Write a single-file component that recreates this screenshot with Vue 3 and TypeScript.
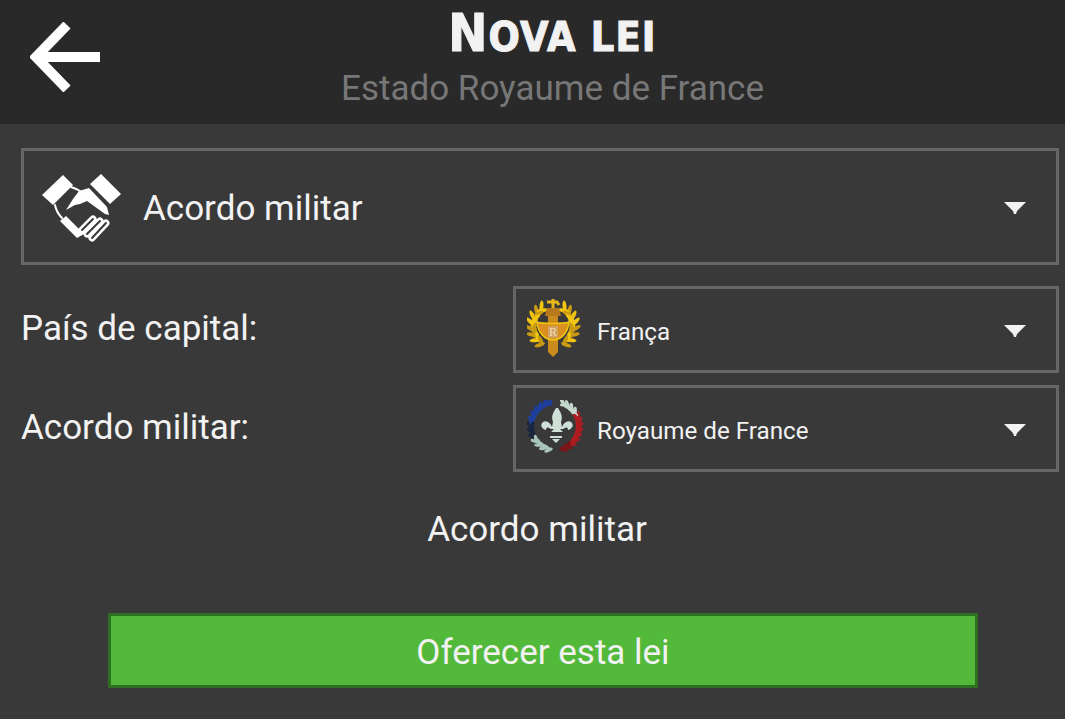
<script setup lang="ts">
interface Row {
  label: string
  value: string
  icon: 'emblem' | 'wreath'
}

interface Leaf {
  x: number
  y: number
  rot: number
  fill: string
}

const rows: Row[] = [
  { label: 'País de capital:', value: 'França', icon: 'emblem' },
  { label: 'Acordo militar:', value: 'Royaume de France', icon: 'wreath' },
]

// Place leaves along a circle; angles in degrees, 0 = right, going clockwise.
function ring(cx: number, cy: number, rad: number, from: number, to: number, n: number, tilt: number, colour: (t: number) => string): Leaf[] {
  const out: Leaf[] = []
  for (let i = 0; i < n; i++) {
    const t = i / (n - 1)
    const a = from + (to - from) * t
    const r = (a * Math.PI) / 180
    out.push({
      x: cx + Math.cos(r) * rad,
      y: cy + Math.sin(r) * rad,
      rot: a + tilt,
      fill: colour(t),
    })
  }
  return out
}

const blue = (t: number) => (t < 0.5 ? '#1e3f9e' : t < 0.72 ? '#1a2640' : '#a9c4b8')
const red = (t: number) => (t < 0.28 ? '#c5d8cf' : t < 0.85 ? '#b01b20' : '#7c1418')
const gold = (t: number) => (t % 0.2 < 0.1 ? '#f2c511' : '#c99a12')

const wreath: Leaf[] = [
  ...ring(28, 26, 25, 258, 105, 13, 50, blue),
  ...ring(28, 26, 23, 252, 110, 13, 110, blue),
  ...ring(28, 26, 25, -72, 70, 13, -50, red),
  ...ring(28, 26, 23, -66, 66, 13, -110, red),
]

const laurel: Leaf[] = [
  ...ring(26, 28, 23, 240, 125, 8, 35, gold),
  ...ring(26, 28, 19, 235, 130, 8, 115, gold),
  ...ring(26, 28, 23, -60, 55, 8, -35, gold),
  ...ring(26, 28, 19, -55, 50, 8, -115, gold),
]
</script>

<template>
  <div class="page">
    <header class="top">
      <button class="back" aria-label="Voltar">
        <svg width="72" height="70" viewBox="0 0 72 70">
          <path d="M37 3 6 35l31 32M6 35h64" fill="none" stroke="#fff" stroke-width="10" />
        </svg>
      </button>
      <div class="titles">
        <h1 class="title"><span class="cap">N</span>ova lei</h1>
        <p class="subtitle">Estado Royaume de France</p>
      </div>
    </header>

    <main class="content">
      <div class="select select-main">
        <svg class="shake" width="82" height="70" viewBox="10 5 82 70">
          <g fill="#fff">
            <path d="M12 28 33 8l10 10-20 20z" />
            <path d="M60 17 71 7l20 20-11 10z" />
            <path d="M36 43l7-11 6-8 10-3 18 19 2 8-4-1-18-13-7 3-5 1z" />
            <path d="M30 54l6-5 18 18-7 4z" />
          </g>
          <g fill="none" stroke="#fff" stroke-width="2" stroke-linecap="round">
            <path d="M25 38c1 5 3 9 7 13M41 20c3 1 6 2 9 4" />
          </g>
          <g fill="none" stroke-linecap="round">
            <path d="m52 63 11-11M57 67l13-13M62 71l14-15" stroke="#fff" stroke-width="7" />
            <path d="m52 63 11-11M57 67l13-13M62 71l14-15" stroke="#393939" stroke-width="2" />
          </g>
        </svg>
        <span class="select-text">Acordo militar</span>
        <svg class="caret" width="22" height="12" viewBox="0 0 22 12"><path d="M0 0h22l-9 9-1 3h-2l-1-3z" fill="#f2f2f2" /></svg>
      </div>

      <div v-for="row in rows" :key="row.label" class="row">
        <span class="label">{{ row.label }}</span>
        <div class="select select-small">
          <svg v-if="row.icon === 'emblem'" class="arms" width="57" height="60" viewBox="0 0 57 60">
            <ellipse v-for="(l, i) in laurel" :key="i" :cx="l.x" :cy="l.y" rx="5.5" ry="2" :fill="l.fill" :transform="`rotate(${l.rot} ${l.x} ${l.y})`" />
            <path d="M21 10h10v44l-5 5-5-5z" fill="#c98a1e" />
            <path d="M26 1v9M20 4h10l2 3" stroke="#e8b71c" stroke-width="3" fill="none" />
            <path d="M20 10h12l2 8H18z" fill="#b8791c" />
            <path d="M10 24c6 2 26 2 32 0-1 11-8 18-16 18S11 35 10 24z" fill="#d9901f" stroke="#f1c40f" stroke-width="1.5" />
            <rect x="21" y="28" width="10" height="12" fill="#d0a060" />
            <text x="26" y="38" class="arms-r">R</text>
          </svg>
          <svg v-else class="arms" width="57" height="54" viewBox="0 0 57 54">
            <ellipse v-for="(l, i) in wreath" :key="i" :cx="l.x" :cy="l.y" rx="4.5" ry="1.8" :fill="l.fill" :transform="`rotate(${l.rot} ${l.x} ${l.y})`" />
            <g transform="translate(3 0)">
              <path d="M26 8c-3 5-5 8-3 14l-1 5c-2-5-6-7-9-5-3 2-2 7 3 8 0-2 1-3 3-2 1 1 4 1 5 1l-3 3h12l-3-3c2 0 4 0 5-1 2-1 3 0 3 2 5-1 6-6 3-8-3-2-7 0-9 5l-1-5c2-6 0-9-3-14z" fill="#cfe0d8" />
              <path d="M20 36h12v2H20zM22 39l4 4 4-4z" fill="#cfe0d8" />
            </g>
          </svg>
          <span class="select-text small">{{ row.value }}</span>
          <svg class="caret" width="22" height="12" viewBox="0 0 22 12"><path d="M0 0h22l-9 9-1 3h-2l-1-3z" fill="#f2f2f2" /></svg>
        </div>
      </div>

      <p class="law">Acordo militar</p>

      <button class="offer">Oferecer esta lei</button>
    </main>
  </div>
</template>

<style scoped>
.page {
  width: 1065px;
  height: 719px;
  overflow: hidden;
  background: #393939;
  font-family: Roboto, "Liberation Sans", sans-serif;
  color: #f2f2f2;
}
.top {
  height: 124px;
  background: #292929;
  display: flex;
  align-items: flex-start;
}
.back {
  width: 30px;
  padding: 0 0 0 30px;
  margin-top: 22px;
  border: 0;
  background: none;
  display: block;
}
.back svg { display: block; }
.titles {
  flex: 1;
  padding-top: 4px;
  padding-left: 10px;
  text-align: center;
}
.title {
  margin: 0;
  height: 58px;
  font-family: "DejaVu Sans", sans-serif;
  font-stretch: condensed;
  font-size: 41px;
  line-height: 58px;
  font-weight: 700;
  text-transform: uppercase;
  letter-spacing: 1.2px;
  -webkit-text-stroke: 1px #f2f2f2;
  color: #f2f2f2;
}
.cap { font-size: 52px; }
.subtitle {
  margin: 5px 0 0;
  font-size: 35px;
  line-height: 44px;
  color: #777;
}
.content {
  padding: 24px 6px 0 21px;
  display: flex;
  flex-direction: column;
}
.select {
  border: 3px solid #666;
  display: flex;
  align-items: center;
  box-sizing: border-box;
}
.select-main {
  height: 117px;
  padding-left: 16px;
  margin-bottom: 21px;
}
.shake { flex-shrink: 0; margin-right: 21px; }
.select-text {
  flex: 1;
  padding-top: 4px;
  font-size: 35px;
  color: #f2f2f2;
}
.select-text.small { font-size: 24.2px; }
.caret { flex-shrink: 0; margin-top: 2px; margin-right: 30px; }
.row {
  display: flex;
  align-items: center;
  height: 87px;
  margin-bottom: 12px;
}
.label {
  width: 492px;
  font-size: 35px;
  margin-top: -3px;
}
.select-small {
  flex: 1;
  height: 87px;
  padding-left: 11px;
}
.arms { flex-shrink: 0; margin-right: 13px; margin-top: -3px; }
.arms-r {
  font-family: "Liberation Serif", serif;
  font-size: 12px;
  text-anchor: middle;
  fill: #f0dcb8;
}
.law {
  margin: 18px 0 0;
  padding-right: 6px;
  text-align: center;
  font-size: 35px;
  line-height: 56px;
}
.offer {
  display: block;
  box-sizing: border-box;
  align-self: flex-start;
  width: 870px;
  height: 75px;
  margin: 55px 0 0 87px;
  padding-top: 5px;
  border: 3px solid #2f6f22;
  border-radius: 1px;
  background: #53b93a;
  color: #f2f2f2;
  font-family: inherit;
  font-size: 35px;
}
</style>

<style>
body { background: #393939; }
</style>
